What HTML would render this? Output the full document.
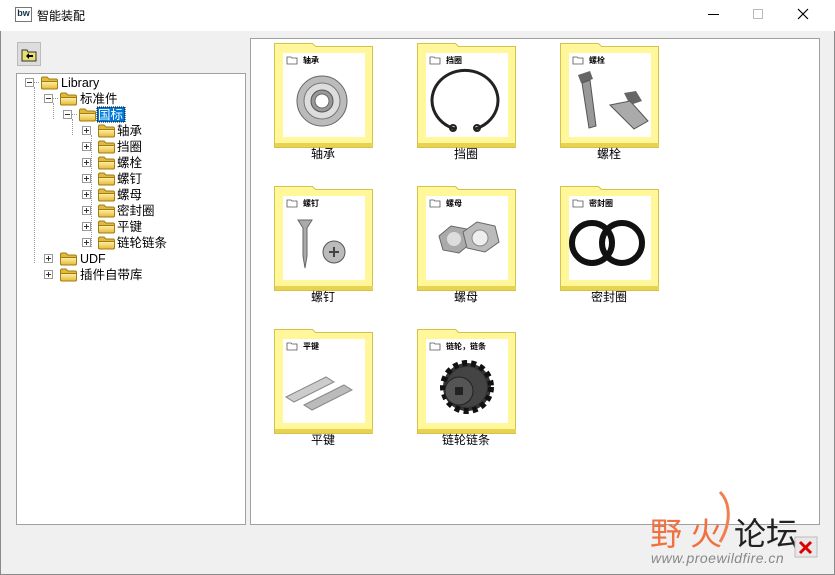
<!DOCTYPE html>
<html><head><meta charset="utf-8"><style>
*{margin:0;padding:0;box-sizing:border-box}
body{width:835px;height:575px;background:#f0f0f0;font-family:"Liberation Sans","Noto Sans CJK SC",sans-serif;font-size:12px;color:#000;position:relative;overflow:hidden}
.win{position:absolute;left:0;top:0;width:835px;height:575px;border:1px solid #8a8a8a}
.title{position:absolute;left:0;top:0;width:835px;height:31px;background:#fff}
.abs{position:absolute}
.tree{position:absolute;left:16px;top:73px;width:230px;height:452px;background:#fff;border:1px solid #a0a0a0}
.right{position:absolute;left:250px;top:38px;width:570px;height:487px;background:#fff;border:1px solid #a0a0a0}
.dv{position:absolute;border-left:1px dotted #999;width:0}
</style></head><body>
<div class="win"></div>
<div class="title">
 <div class="abs" style="left:15px;top:7px;width:17px;height:15px;border:1px solid #777;background:#fff;font-size:9px;font-weight:bold;color:#134;line-height:10px;text-align:center">bw</div>
 <div class="abs" style="left:37px;top:7px;font-size:12px">智能装配</div>
 <div class="abs" style="left:708px;top:14px;width:11px;height:1px;background:#000"></div>
 <div class="abs" style="left:753px;top:9px;width:10px;height:10px;border:1px solid #bbb"></div>
 <svg class="abs" style="left:797px;top:8px" width="12" height="12"><path d="M1 1L11 11M11 1L1 11" stroke="#000" stroke-width="1.2"/></svg>
</div>
<div class="abs" style="left:17px;top:42px;width:24px;height:24px;background:#ddd;border:1px solid #bbb">
 <svg width="22" height="22"><path d="M4 7h5l1 2h8v9H4z" fill="#e8e070" stroke="#333"/><path d="M8 13l3-3v2h4v2h-4v2z" fill="#000"/></svg>
</div>
<div class="tree">
 <div class="dv" style="left:17px;top:13px;height:176px"></div>
 <div class="dv" style="left:36px;top:29px;height:16px"></div>
 <div class="dv" style="left:55px;top:45px;height:16px"></div>
 <div class="dv" style="left:74px;top:61px;height:112px"></div>
</div>
<div class="right"></div>
<svg class="abs" style="left:0;top:0" width="835" height="575">
 <defs>
  <linearGradient id="fg" x1="0" y1="0" x2="0" y2="1"><stop offset="0" stop-color="#fff2b0"/><stop offset="1" stop-color="#e8b830"/></linearGradient>
  <g id="fd"><path d="M1.5 3.5q0-1.5 1.5-1.5h4l2 2h7q1.5 0 1.5 1.5v7q0 1.5-1.5 1.5h-13q-1.5 0-1.5-1.5z" fill="#e6b838" stroke="#a07d16"/><path d="M1.5 6.5h16v6q0 1.5-1.5 1.5h-13q-1.5 0-1.5-1.5z" fill="url(#fg)" stroke="#a07d16"/></g>
  <g id="pl"><rect x="0.5" y="0.5" width="8" height="8" fill="#fff" stroke="#999"/><path d="M2 4.5h5M4.5 2v5" stroke="#333"/></g>
  <g id="mi"><rect x="0.5" y="0.5" width="8" height="8" fill="#fff" stroke="#999"/><path d="M2 4.5h5" stroke="#333"/></g>
  <g id="card">
   <path d="M0.5 0.5h38l3 3h57v101H0.5z" fill="#fff79a" stroke="#d4c24a"/>
   <rect x="1" y="100" width="98" height="4" fill="#e9d250"/>
   <rect x="9" y="10" width="82" height="84" fill="#fff"/>
   <path d="M13 14h4l1 1h5v6h-10z" fill="none" stroke="#555" stroke-width="0.8"/>
  </g>
 </defs>
 <g font-size="12.5" font-family="Liberation Sans,Noto Sans CJK SC,sans-serif">
  <use href="#mi" x="25" y="78"/><line x1="34" y1="82.5" x2="40" y2="82.5" stroke="#999" stroke-dasharray="1 1"/><use href="#fd" x="40" y="75"/><text x="61" y="87">Library</text>
  <use href="#mi" x="44" y="94"/><line x1="53" y1="98.5" x2="59" y2="98.5" stroke="#999" stroke-dasharray="1 1"/><use href="#fd" x="59" y="91"/><text x="80" y="103">标准件</text>
  <use href="#mi" x="63" y="110"/><line x1="72" y1="114.5" x2="78" y2="114.5" stroke="#999" stroke-dasharray="1 1"/><use href="#fd" x="78" y="107"/>
  <rect x="97" y="107" width="28" height="15" fill="#0078d7" stroke="#000" stroke-dasharray="1 1"/><text x="98" y="119" fill="#fff">国标</text>
  <g>
   <use href="#pl" x="82" y="126"/><use href="#fd" x="97" y="123"/><text x="117" y="135">轴承</text>
   <use href="#pl" x="82" y="142"/><use href="#fd" x="97" y="139"/><text x="117" y="151">挡圈</text>
   <use href="#pl" x="82" y="158"/><use href="#fd" x="97" y="155"/><text x="117" y="167">螺栓</text>
   <use href="#pl" x="82" y="174"/><use href="#fd" x="97" y="171"/><text x="117" y="183">螺钉</text>
   <use href="#pl" x="82" y="190"/><use href="#fd" x="97" y="187"/><text x="117" y="199">螺母</text>
   <use href="#pl" x="82" y="206"/><use href="#fd" x="97" y="203"/><text x="117" y="215">密封圈</text>
   <use href="#pl" x="82" y="222"/><use href="#fd" x="97" y="219"/><text x="117" y="231">平键</text>
   <use href="#pl" x="82" y="238"/><use href="#fd" x="97" y="235"/><text x="117" y="247">链轮链条</text>
  </g>
  <use href="#pl" x="44" y="254"/><use href="#fd" x="59" y="251"/><text x="80" y="263">UDF</text>
  <use href="#pl" x="44" y="270"/><use href="#fd" x="59" y="267"/><text x="80" y="279">插件自带库</text>
 </g>
 <g font-family="Liberation Sans,Noto Sans CJK SC,sans-serif">
  <g transform="translate(274,43)"><use href="#card"/><text x="29" y="20" font-size="8" font-weight="bold">轴承</text>
   <circle cx="48" cy="58" r="25" fill="#bbb" stroke="#666"/><circle cx="48" cy="58" r="18" fill="#ddd" stroke="#777"/><circle cx="48" cy="58" r="11" fill="#999" stroke="#555"/><circle cx="48" cy="58" r="7" fill="#fff" stroke="#666"/></g>
  <g transform="translate(417,43)"><use href="#card"/><text x="29" y="20" font-size="8" font-weight="bold">挡圈</text>
   <path d="M38 86A33 30 0 1 1 58 86" fill="none" stroke="#222" stroke-width="3"/><circle cx="36" cy="85" r="3" fill="none" stroke="#222" stroke-width="2"/><circle cx="60" cy="85" r="3" fill="none" stroke="#222" stroke-width="2"/></g>
  <g transform="translate(560,43)"><use href="#card"/><text x="29" y="20" font-size="8" font-weight="bold">螺栓</text>
   <path d="M18 32l12-4 3 8-12 4z" fill="#666"/><path d="M22 40l8-3 6 46-7 2z" fill="#999" stroke="#555"/><path d="M64 50l12-2 6 10-12 4z" fill="#666"/><path d="M50 62l20-4 18 20-14 8z" fill="#aaa" stroke="#555"/></g>
  <g transform="translate(274,186)"><use href="#card"/><text x="29" y="20" font-size="8" font-weight="bold">螺钉</text>
   <path d="M24 34h14l-5 8v28l-2 12-2-12V42z" fill="#aaa" stroke="#666"/><circle cx="60" cy="66" r="11" fill="#bbb" stroke="#555"/><path d="M55 66h10M60 61v10" stroke="#444" stroke-width="2"/></g>
  <g transform="translate(417,186)"><use href="#card"/><text x="29" y="20" font-size="8" font-weight="bold">螺母</text>
   <path d="M22 50l12-10 16 3 4 14-12 10-16-3z" fill="#aaa" stroke="#666"/><circle cx="37" cy="53" r="7" fill="#ddd"/><path d="M46 46l14-10 18 4 4 16-14 10-18-4z" fill="#bbb" stroke="#666"/><circle cx="63" cy="52" r="8" fill="#eee" stroke="#888"/></g>
  <g transform="translate(560,186)"><use href="#card"/><text x="29" y="20" font-size="8" font-weight="bold">密封圈</text>
   <circle cx="32" cy="57" r="20" fill="none" stroke="#111" stroke-width="6"/><circle cx="62" cy="57" r="20" fill="none" stroke="#111" stroke-width="6"/></g>
  <g transform="translate(274,329)"><use href="#card"/><text x="29" y="20" font-size="8" font-weight="bold">平键</text>
   <path d="M12 68l40-20 8 5-40 20z" fill="#ccc" stroke="#888"/><path d="M30 76l40-20 8 5-40 20z" fill="#bbb" stroke="#888"/></g>
  <g transform="translate(417,329)"><use href="#card"/><text x="29" y="20" font-size="8" font-weight="bold">链轮，链条</text>
   <circle cx="50" cy="58" r="24" fill="#333" stroke="#111" stroke-width="6" stroke-dasharray="5 4"/><circle cx="50" cy="58" r="20" fill="#444"/><circle cx="42" cy="62" r="14" fill="#555" stroke="#222"/><rect x="38" y="58" width="8" height="8" fill="#222"/></g>
 </g>
 <g font-size="12" font-family="Liberation Sans,Noto Sans CJK SC,sans-serif" text-anchor="middle">
  <text x="323" y="158">轴承</text><text x="466" y="158">挡圈</text><text x="609" y="158">螺栓</text>
  <text x="323" y="301">螺钉</text><text x="466" y="301">螺母</text><text x="609" y="301">密封圈</text>
  <text x="323" y="444">平键</text><text x="466" y="444">链轮链条</text>
 </g>
 <text x="650" y="545" font-size="32" fill="#f07040" font-family="Noto Sans CJK SC,sans-serif">野</text>
 <path d="M720 492c10 10 12 30 0 50" fill="none" stroke="#f08050" stroke-width="3"/>
 <text x="690" y="545" font-size="32" fill="#f07040" font-family="Noto Sans CJK SC,sans-serif">火</text>
 <text x="734" y="545" font-size="32" fill="#222" font-family="Noto Sans CJK SC,sans-serif">论坛</text>
 <text x="651" y="563" font-size="14" fill="#888" font-style="italic" font-family="Liberation Sans,sans-serif" letter-spacing="0.5">www.proewildfire.cn</text>
 <rect x="795" y="537" width="22" height="20" fill="#e8e8e8" stroke="#bbb"/>
 <path d="M800 542l11 11M811 542l-11 11" stroke="#d00" stroke-width="3"/>
</svg>
</body></html>
